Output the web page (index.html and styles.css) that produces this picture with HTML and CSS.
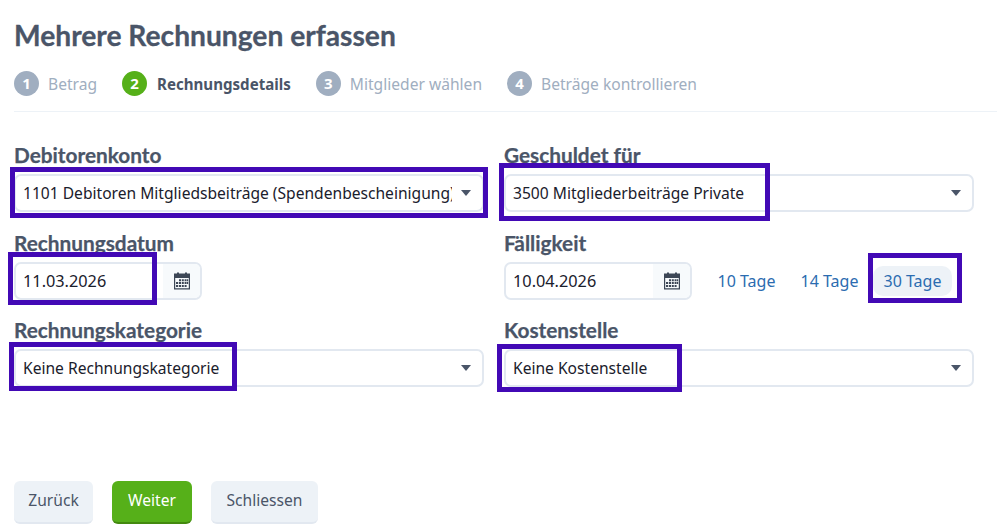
FILE: index.html
```html
<!DOCTYPE html>
<html lang="de">
<head>
<meta charset="utf-8">
<title>Mehrere Rechnungen erfassen</title>
<link rel="stylesheet" href="styles.css">
</head>
<body>
<main class="page">
  <h1 class="title">Mehrere Rechnungen erfassen</h1>
  <ol class="steps">
    <li class="step"><span class="num">1</span><span class="step-label">Betrag</span></li>
    <li class="step active"><span class="num">2</span><span class="step-label">Rechnungsdetails</span></li>
    <li class="step"><span class="num">3</span><span class="step-label">Mitglieder wählen</span></li>
    <li class="step"><span class="num">4</span><span class="step-label">Beträge kontrollieren</span></li>
  </ol>
  <form class="form">
    <div class="field">
      <div class="label">Debitorenkonto</div>
      <div class="control select"><span class="value">1101 Debitoren Mitgliedsbeiträge (Spendenbescheinigung)</span><span class="caret"></span></div>
      <div class="mark mark-konto"></div>
    </div>
    <div class="field">
      <div class="label">Geschuldet für</div>
      <div class="control select"><span class="value">3500 Mitgliederbeiträge Private</span><span class="caret"></span></div>
      <div class="mark mark-schuld"></div>
    </div>
    <div class="field">
      <div class="label">Rechnungsdatum</div>
      <div class="date-row">
        <div class="control date"><span class="date-value">11.03.2026</span><span class="addon"><svg class="cal" viewBox="0 0 18 18"><use href="#cal"/></svg></span></div>
      </div>
      <div class="mark mark-datum"></div>
    </div>
    <div class="field">
      <div class="label">Fälligkeit</div>
      <div class="date-row">
        <div class="control date"><span class="date-value">10.04.2026</span><span class="addon"><svg class="cal" viewBox="0 0 18 18"><use href="#cal"/></svg></span></div>
        <div class="quick">
          <span class="pill">10 Tage</span>
          <span class="pill">14 Tage</span>
          <span class="pill on">30 Tage</span>
        </div>
      </div>
      <div class="mark mark-tage"></div>
    </div>
    <div class="field">
      <div class="label">Rechnungskategorie</div>
      <div class="control select"><span class="value">Keine Rechnungskategorie</span><span class="caret"></span></div>
      <div class="mark mark-kat"></div>
    </div>
    <div class="field">
      <div class="label">Kostenstelle</div>
      <div class="control select"><span class="value">Keine Kostenstelle</span><span class="caret"></span></div>
      <div class="mark mark-kost"></div>
    </div>
  </form>
  <div class="actions">
    <button type="button" class="btn back">Zurück</button>
    <button type="button" class="btn primary">Weiter</button>
    <button type="button" class="btn close">Schliessen</button>
  </div>
</main>
<svg class="defs" width="0" height="0">
  <symbol id="cal" viewBox="0 0 18 18">
    <path fill="#3d4756" d="M1 1.500h3V0.500h2v1h6v-1h2v1h3v16H1zM2.200 6v10.300h13.600V6z"/>
    <path fill="#3d4756" d="M6 7.300h2v2H6zM8.800 7.300h2v2h-2zM11.600 7.300h2v2h-2zM14 7.300h1.200v2H14zM3 10.100h2.200v2H3zM6 10.100h2v2H6zM8.800 10.100h2v2h-2zM11.600 10.100h2v2h-2zM14 10.100h1.200v2H14zM3 12.900h2.200v2H3zM6 12.900h2v2H6zM8.800 12.900h2v2h-2zM11.600 12.900h2v2h-2z"/>
  </symbol>
</svg>
</body>
</html>
```
FILE: styles.css
```css
* { box-sizing: border-box; }
html, body { margin: 0; padding: 0; background: #fff; }
body { font-family: "Noto Sans", "Open Sans", sans-serif; color: #2d3748; height: 532px; overflow: hidden; }
.page { padding: 18px 0 0 14px; }
.title { margin: 0; font: 700 28.2px/34px Lato, sans-serif; color: #4a5568; -webkit-text-stroke: 0.3px #4a5568; }
.steps { list-style: none; margin: 19px 0 0; padding: 0 0 15px; display: flex; gap: 25px; border-bottom: 1px solid #edf2f7; }
.step { display: flex; align-items: center; gap: 9px; height: 25px; font-size: 15.6px; color: #a0aec0; }
.num { width: 25px; height: 25px; border-radius: 50%; background: #a0aec0; color: #fff; font-weight: 700; font-size: 15px; line-height: 25px; text-align: center; }
.active { color: #4a5568; font-weight: 700; font-size: 15.1px; gap: 10px; }
.active .num { background: #56b019; }
.form { display: grid; grid-template-columns: 470px 470px; column-gap: 20px; row-gap: 17.5px; margin-top: 30px; }
.field { position: relative; }
.label { font: 700 20.8px/25px Lato, sans-serif; color: #4a5568; margin-bottom: 7px; height: 25px; -webkit-text-stroke: 0.25px #4a5568; }
.control { height: 38px; border: 2px solid #e2e8f0; border-radius: 7px; background: #fff; display: flex; align-items: center; font-size: 15.6px; color: #1a202c; }
.select { padding: 0 11px 0 7px; }
.value { flex: 1; min-width: 0; white-space: nowrap; overflow: hidden; margin-right: 9px; }
.caret { width: 0; height: 0; border-left: 5.5px solid transparent; border-right: 5.5px solid transparent; border-top: 6px solid #4a5568; }
.date-row { display: flex; align-items: center; }
.date { width: 188px; overflow: hidden; flex: none; }
.date-value { flex: 1; padding-left: 7px; font-size: 16.3px; }
.addon { width: 37px; height: 100%; background: #f7fafc; display: flex; align-items: center; justify-content: center; }
.cal { width: 18px; height: 18px; }
.quick { display: flex; align-items: center; gap: 4px; margin-left: 15px; }
.pill { width: 79px; height: 30px; line-height: 30px; text-align: center; font-size: 16px; color: #2b6cb0; border-radius: 10px; }
.on { background: #edf2f7; }
.mark { position: absolute; border: 5px solid #4209b5; pointer-events: none; }
.mark-konto { left: -4px; top: 25px; width: 478px; height: 51px; }
.mark-schuld { left: -5px; top: 21px; width: 271px; height: 58px; }
.mark-datum { left: -6px; top: 22.5px; width: 149px; height: 53px; }
.mark-tage { left: 364px; top: 23.5px; width: 94px; height: 50px; }
.mark-kat { left: -5px; top: 25px; width: 228px; height: 49px; }
.mark-kost { left: -7px; top: 27px; width: 185px; height: 48px; }
.actions { display: flex; gap: 19px; margin-top: 94px; }
.btn { height: 43px; padding: 0 0 3px; border: 0; border-bottom: 2px solid #e2e8f0; border-radius: 6px; background: #edf2f7; color: #4a5568; font: 15.6px "Noto Sans", sans-serif; }
.back { width: 79px; }
.primary { width: 80px; background: #56b019; border-bottom-color: #43890f; color: #fff; }
.close { width: 107px; }
.defs { position: absolute; }
```
